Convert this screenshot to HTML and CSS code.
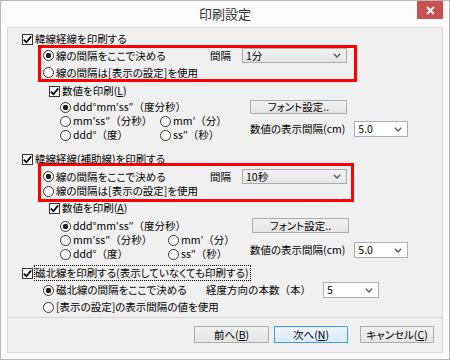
FILE: index.html
```html
<!DOCTYPE html>
<html lang="ja">
<head>
<meta charset="utf-8">
<title>印刷設定</title>
<link rel="stylesheet" href="styles.css">
</head>
<body>

<div class="window">
  <div class="titlebar">
    <span class="title">印刷設定</span>
    <span class="close"><svg width="9" height="9" viewBox="0 0 9 9"><path d="M1 1L8 8M8 1L1 8" stroke="#fff" stroke-width="1.8"/></svg></span>
  </div>

  <div class="content">

    <!-- grid lines -->
    <div class="row cb-row">
      <span class="cb"><svg width="11" height="11" viewBox="0 0 11 11"><polyline points="1.8,5.6 4.4,8.2 9.2,2.4" fill="none" stroke="#000" stroke-width="1.7"/></svg></span>
      <span>緯線経線を印刷する</span>
    </div>
    <div class="redbox rb1">
      <div class="row rb-first">
        <span class="rd on"></span><span class="grow">線の間隔をここで決める</span>
        <span class="interval">間隔</span>
        <span class="select gray wide">1分<svg class="chev" width="8" height="5" viewBox="0 0 8 5"><polyline points="0.8,0.8 4,4 7.2,0.8" fill="none" stroke="#555" stroke-width="1.3"/></svg></span>
      </div>
      <div class="row rb-second"><span class="rd"></span><span>線の間隔は[表示の設定]を使用</span></div>
    </div>
    <div class="row cb-row sub">
      <span class="cb"><svg width="11" height="11" viewBox="0 0 11 11"><polyline points="1.8,5.6 4.4,8.2 9.2,2.4" fill="none" stroke="#000" stroke-width="1.7"/></svg></span>
      <span>数値を印刷(<u>L</u>)</span>
    </div>
    <div class="fmt">
      <div class="fmt-radios">
        <div class="row full"><span class="rd on"></span><span class="wide-paren">ddd°mm′ss″（度分秒）</span></div>
        <div class="row"><span class="rd"></span><span class="wide-paren">mm′ss″（分秒）</span></div>
        <div class="row"><span class="rd"></span><span class="wide-paren">mm′（分）</span></div>
        <div class="row"><span class="rd"></span><span class="wide-paren">ddd°（度）</span></div>
        <div class="row"><span class="rd"></span><span class="wide-paren">ss″（秒）</span></div>
      </div>
      <div class="fmt-right">
        <span class="button font-btn">フォント設定..</span>
        <div class="cm-row">
          <span>数値の表示間隔(cm)</span>
          <span class="select white small">5.0<svg class="chev" width="8" height="5" viewBox="0 0 8 5"><polyline points="0.8,0.8 4,4 7.2,0.8" fill="none" stroke="#555" stroke-width="1.3"/></svg></span>
        </div>
      </div>
    </div>

    <!-- auxiliary grid lines -->
    <div class="row cb-row second">
      <span class="cb"><svg width="11" height="11" viewBox="0 0 11 11"><polyline points="1.8,5.6 4.4,8.2 9.2,2.4" fill="none" stroke="#000" stroke-width="1.7"/></svg></span>
      <span>緯線経線(補助線)を印刷する</span>
    </div>
    <div class="redbox rb2">
      <div class="row rb-first">
        <span class="rd on"></span><span class="grow">線の間隔をここで決める</span>
        <span class="interval">間隔</span>
        <span class="select gray wide">10秒<svg class="chev" width="8" height="5" viewBox="0 0 8 5"><polyline points="0.8,0.8 4,4 7.2,0.8" fill="none" stroke="#555" stroke-width="1.3"/></svg></span>
      </div>
      <div class="row rb-second"><span class="rd"></span><span>線の間隔は[表示の設定]を使用</span></div>
    </div>
    <div class="row cb-row sub sub2">
      <span class="cb"><svg width="11" height="11" viewBox="0 0 11 11"><polyline points="1.8,5.6 4.4,8.2 9.2,2.4" fill="none" stroke="#000" stroke-width="1.7"/></svg></span>
      <span>数値を印刷(<u>A</u>)</span>
    </div>
    <div class="fmt fmt2">
      <div class="fmt-radios">
        <div class="row full"><span class="rd on"></span><span class="wide-paren">ddd°mm′ss″（度分秒）</span></div>
        <div class="row"><span class="rd"></span><span class="wide-paren">mm′ss″（分秒）</span></div>
        <div class="row"><span class="rd"></span><span class="wide-paren">mm′（分）</span></div>
        <div class="row"><span class="rd"></span><span class="wide-paren">ddd°（度）</span></div>
        <div class="row"><span class="rd"></span><span class="wide-paren">ss″（秒）</span></div>
      </div>
      <div class="fmt-right">
        <span class="button font-btn">フォント設定..</span>
        <div class="cm-row">
          <span>数値の表示間隔(cm)</span>
          <span class="select white small">5.0<svg class="chev" width="8" height="5" viewBox="0 0 8 5"><polyline points="0.8,0.8 4,4 7.2,0.8" fill="none" stroke="#555" stroke-width="1.3"/></svg></span>
        </div>
      </div>
    </div>

    <!-- magnetic north -->
    <div class="row cb-row third">
      <span class="cb"><svg width="11" height="11" viewBox="0 0 11 11"><polyline points="1.8,5.6 4.4,8.2 9.2,2.4" fill="none" stroke="#000" stroke-width="1.7"/></svg></span>
      <span class="focus">磁北線を印刷する(表示していなくても印刷する)</span>
    </div>
    <div class="row mag-first">
      <span class="rd on"></span><span class="grow">磁北線の間隔をここで決める</span>
      <span class="wide-paren">経度方向の本数（本）</span>
      <span class="select white small mag-sel">5<svg class="chev" width="8" height="5" viewBox="0 0 8 5"><polyline points="0.8,0.8 4,4 7.2,0.8" fill="none" stroke="#555" stroke-width="1.3"/></svg></span>
    </div>
    <div class="row mag-second"><span class="rd"></span><span>[表示の設定]の表示間隔の値を使用</span></div>

    <div class="sep"></div>

    <div class="actions">
      <span class="button">前へ(<u>B</u>)</span>
      <span class="button default">次へ(<u>N</u>)</span>
      <span class="button cancel">キャンセル(<u>C</u>)</span>
    </div>
  </div>
</div>

</body>
</html>
```

FILE: styles.css
```css
body {
  margin: 0;
  font-family: "Noto Sans CJK JP", sans-serif;
  font-size: 10.5px;
  line-height: 14px;
  font-feature-settings: "palt";
  color: #000;
}
.window {
  width: 450px;
  height: 360px;
  box-sizing: border-box;
  border: 1px solid #b8b8b8;
  background: #fbfbfb;
  padding: 0 6px 6px;
  display: flex;
  flex-direction: column;
}
.titlebar {
  height: 26px;
  display: grid;
  grid-template-columns: 1fr auto 1fr;
}
.title { grid-column: 2; align-self: center; font-size: 13px; color: #333; line-height: 18px; }
.close {
  grid-column: 3;
  justify-self: end;
  width: 26px;
  height: 18px;
  background: #c75050;
  display: flex;
  align-items: center;
  justify-content: center;
}
.content {
  flex: 1;
  border: 1px solid #d9d9d9;
  background: #f0f0f0;
}

/* rows */
.row { display: flex; align-items: center; height: 14px; white-space: nowrap; gap: 2px; }
.grow { flex: 1; }
.wide-paren { font-feature-settings: normal; }
.cb-row { margin: 4px 0 0 14px; }
.cb-row.sub { margin: 2px 0 0 41px; }
.cb-row.second { margin-top: 10px; }
.cb-row.sub2 { margin-top: -1px; }
.cb-row.third { margin-top: 5px; }

.cb {
  width: 11px; height: 11px; box-sizing: border-box;
  border: 1px solid #333; background: #fff;
  display: flex;
}
.cb svg { margin: -1px; }
.rd {
  width: 11px; height: 11px; box-sizing: border-box;
  border: 1px solid #333; border-radius: 50%; background: #fff;
}
.rd.on { background: radial-gradient(circle, #222 0 2.6px, #fff 3px); }
.focus { outline: 1px dotted #000; outline-offset: 0; padding-right: 1px; }

/* red highlight boxes */
.redbox {
  border: 3px solid #f00;
  box-sizing: border-box;
  margin-left: 30px;
  padding-left: 2px;
}
.rb1 { width: 319px; height: 37px; margin-top: -1px; padding-right: 7px; }
.rb1 .rb-first { height: 15px; }
.rb1 .rb-second { height: 13px; margin-top: 3px; }
.rb2 { width: 316px; height: 39px; margin-top: -3px; padding: 3px 4px 0 2px; }
.rb2 .rb-first { height: 15px; }
.interval { width: 30px; }

/* selects */
.select {
  height: 15px;
  box-sizing: border-box;
  border: 1px solid #acacac;
  display: flex;
  align-items: center;
  justify-content: space-between;
  padding: 0 5px 0 3px;
}
.select.gray { background: linear-gradient(#f2f2f2, #e5e5e5); }
.select.white { background: #fff; border-color: #abadb3; height: 16px; }
.wide { width: 105px; }
.small { width: 56px; }

/* number format block */
.fmt { display: flex; height: 44px; }
.fmt-radios {
  margin-left: 52px;
  padding-top: 2px;
  display: grid;
  grid-template-columns: 100px auto;
  align-content: start;
}
.fmt-radios .full { grid-column: 1 / 3; }
.fmt2 { height: 46px; }
.fmt2 .fmt-radios { padding-top: 4px; grid-template-columns: 108px auto; }
.fmt-right {
  margin-left: auto;
  width: 158px;
  margin-right: 34px;
  display: flex;
  flex-direction: column;
  align-items: flex-start;
}
.font-btn { width: 97px; height: 14px; margin-top: 2px; }
.cm-row {
  align-self: stretch;
  display: flex;
  align-items: center;
  justify-content: flex-end;
  white-space: nowrap;
  gap: 9px;
  margin-top: 7px;
}
.fmt2 .font-btn { height: 15px; margin-top: 3px; margin-left: 2px; }
.fmt2 .cm-row { margin-top: 9px; }

/* magnetic north */
.mag-first { margin: 2px 63px 0 35px; height: 16px; }
.mag-sel { margin-left: 10px; }
.mag-second { margin: 2px 0 0 35px; }

.sep { height: 1px; background: #d5d5d5; margin-top: 3px; }

/* buttons */
.button {
  box-sizing: border-box;
  border: 1px solid #acacac;
  background: linear-gradient(#f0f0f0, #e5e5e5);
  display: inline-flex;
  align-items: center;
  justify-content: center;
  white-space: nowrap;
}
.actions {
  display: flex;
  justify-content: flex-end;
  margin: 8px 8px 0 0;
}
.actions .button { width: 75px; height: 17px; }
.actions .default { border-color: #3c9ae6; background: linear-gradient(#ecf4fc, #dcecfc); margin-left: 5px; width: 74px; }
.actions .cancel { margin-left: 12px; width: 74px; }
```
